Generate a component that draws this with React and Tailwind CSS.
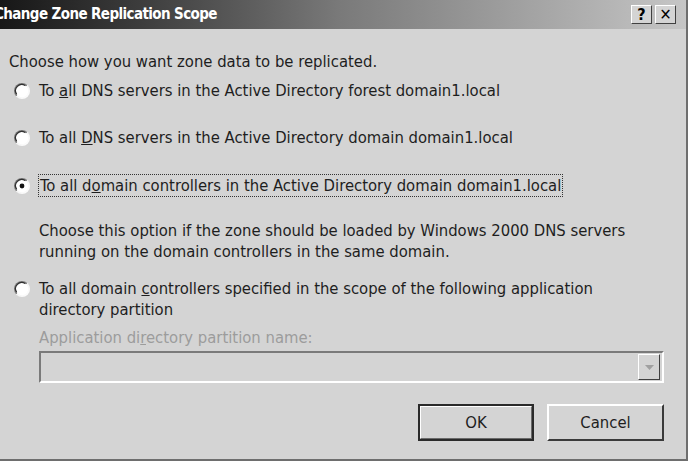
import React from "react";

function Radio({ checked }) {
  return (
    <svg width="18" height="18" viewBox="0 0 18 18" className="shrink-0">
      <defs>
        <linearGradient id="rg" x1="0" y1="0" x2="1" y2="1">
          <stop offset="0" stopColor="#6a6a6a" />
          <stop offset="0.5" stopColor="#8a8a8a" />
          <stop offset="0.5" stopColor="#f4f4f4" />
          <stop offset="1" stopColor="#ffffff" />
        </linearGradient>
      </defs>
      <circle cx="9" cy="9" r="8" fill="url(#rg)" />
      <circle cx="9" cy="9" r="6.2" fill="#ffffff" />
      <path d="M3.6 12.2 A6.2 6.2 0 0 1 12.2 3.6" stroke="#303030" strokeWidth="1.2" fill="none" />
      {checked && <circle cx="9" cy="9" r="2.4" fill="#111" />}
    </svg>
  );
}

export default function App() {
  const font = { fontFamily: '"DejaVu Sans Condensed", "Liberation Sans", sans-serif' };
  return (
    <div className="w-[690px] h-[470px] bg-white overflow-hidden relative" style={font}>
      <div className="ml-[-4px] w-[692px] h-[461px] bg-[#d4d4d4] border-r-2 border-b-2 border-[#6e6e6e] flex flex-col">
        {/* Title bar */}
        <div className="h-[29px] shrink-0 flex items-center bg-gradient-to-r from-[#161616] via-[#7a7a7a] to-[#c6c6c6] pr-[10px]">
          <span className="ml-[-2px] text-white font-bold text-[15px] leading-none tracking-[-0.6px]">Change Zone Replication Scope</span>
          <div className="ml-auto flex gap-[3px]">
            <div className="w-[21px] h-[19px] bg-[#d4d4d4] border border-t-white border-l-white border-r-[#404040] border-b-[#404040] flex items-center justify-center text-[16px] font-bold text-black leading-none">?</div>
            <div className="w-[21px] h-[19px] bg-[#d4d4d4] border border-t-white border-l-white border-r-[#404040] border-b-[#404040] flex items-center justify-center text-[16px] font-bold text-black leading-none">✕</div>
          </div>
        </div>
        {/* Body */}
        <div className="flex flex-col pl-[13px] pr-[22px] text-[16.5px] text-[#1e1e1e] leading-[21px]">
          <div className="mt-[22px]">Choose how you want zone data to be replicated.</div>
          <div className="mt-[8px] flex items-center gap-[8px] pl-[4px]">
            <Radio />
            <span>To <u>a</u>ll DNS servers in the Active Directory forest domain1.local</span>
          </div>
          <div className="mt-[26px] flex items-center gap-[8px] pl-[4px]">
            <Radio />
            <span>To all <u>D</u>NS servers in the Active Directory domain domain1.local</span>
          </div>
          <div className="mt-[26px] flex items-center gap-[7px] pl-[4px]">
            <Radio checked />
            <span className="border border-dotted border-[#333] px-[1px]">To all d<u>o</u>main controllers in the Active Directory domain domain1.local</span>
          </div>
          <div className="mt-[23px] pl-[30px]">
            <div>Choose this option if the zone should be loaded by Windows 2000 DNS servers</div>
            <div>running on the domain controllers in the same domain.</div>
          </div>
          <div className="mt-[16px] flex items-start gap-[8px] pl-[4px]">
            <div className="mt-[2px]"><Radio /></div>
            <div>
              <div>To all domain <u>c</u>ontrollers specified in the scope of the following application</div>
              <div>directory partition</div>
            </div>
          </div>
          <div className="mt-[7px] pl-[30px] text-[#9c9c9c]">Application di<u>r</u>ectory partition name:</div>
          <div className="mt-[3px] ml-[30px] h-[32px] border-2 border-t-[#7a7a7a] border-l-[#7a7a7a] border-r-white border-b-white flex items-center justify-end pr-[2px]">
            <div className="w-[22px] h-[26px] bg-[#d4d4d4] border border-t-white border-l-white border-r-[#404040] border-b-[#404040] flex items-center justify-center">
              <svg width="9" height="5" viewBox="0 0 9 5"><path d="M0 0 H9 L4.5 5 Z" fill="#a0a0a0" /></svg>
            </div>
          </div>
          <div className="mt-[21px] flex justify-end gap-[13px] pr-[0px]">
            <div className="w-[116px] h-[37px] border-2 border-[#2a2a2a] flex items-center justify-center">
              <div className="w-full h-full border border-t-white border-l-white border-r-[#6a6a6a] border-b-[#6a6a6a] flex items-center justify-center">OK</div>
            </div>
            <div className="w-[117px] h-[37px] border-2 border-t-white border-l-white border-r-[#3a3a3a] border-b-[#3a3a3a] flex items-center justify-center">Cancel</div>
          </div>
        </div>
      </div>
    </div>
  );
}
